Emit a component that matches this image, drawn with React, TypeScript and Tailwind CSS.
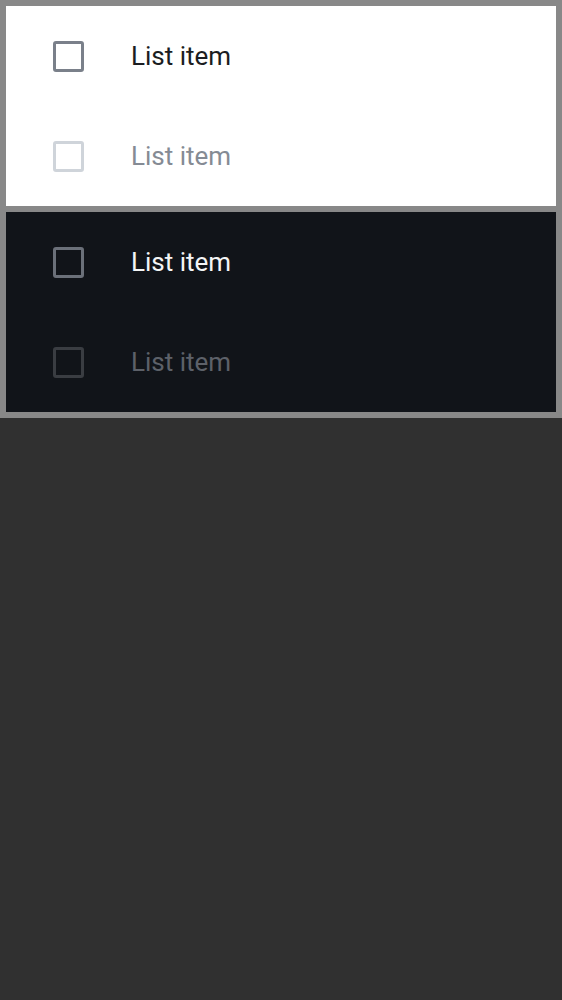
import React from 'react';

const ITEMS = [
  { label: 'List item', disabled: false },
  { label: 'List item', disabled: true },
];

const Row: React.FC<{ label: string; disabled: boolean; dark: boolean }> = ({ label, disabled, dark }) => {
  const box = dark
    ? disabled
      ? 'border-[#3a3d42]'
      : 'border-[#6b7079]'
    : disabled
      ? 'border-[#cfd4da]'
      : 'border-[#7a808a]';
  const text = dark
    ? disabled
      ? 'text-[#5d6169]'
      : 'text-[#f4f5f6]'
    : disabled
      ? 'text-[#858b94]'
      : 'text-[#1b1d21]';

  return (
    <div className="flex h-[100px] items-center">
      <div className="flex w-[125px] shrink-0 items-center pl-[47px]">
        <div className={`h-[31px] w-[31px] rounded-[3px] border-[3px] ${box}`} />
      </div>
      <span className={`text-[26px] leading-none ${text}`}>{label}</span>
    </div>
  );
};

export default function App() {
  return (
    <div className="min-h-[1000px] bg-[#303030]" style={{ fontFamily: 'Roboto, "Noto Sans", sans-serif' }}>
      <div className="flex flex-col gap-[6px] bg-[#888888] p-[6px]">
        <div className="bg-white">
          {ITEMS.map((item, i) => (
            <Row key={i} label={item.label} disabled={item.disabled} dark={false} />
          ))}
        </div>
        <div className="bg-[#111419]">
          {ITEMS.map((item, i) => (
            <Row key={i} label={item.label} disabled={item.disabled} dark />
          ))}
        </div>
      </div>
    </div>
  );
}
